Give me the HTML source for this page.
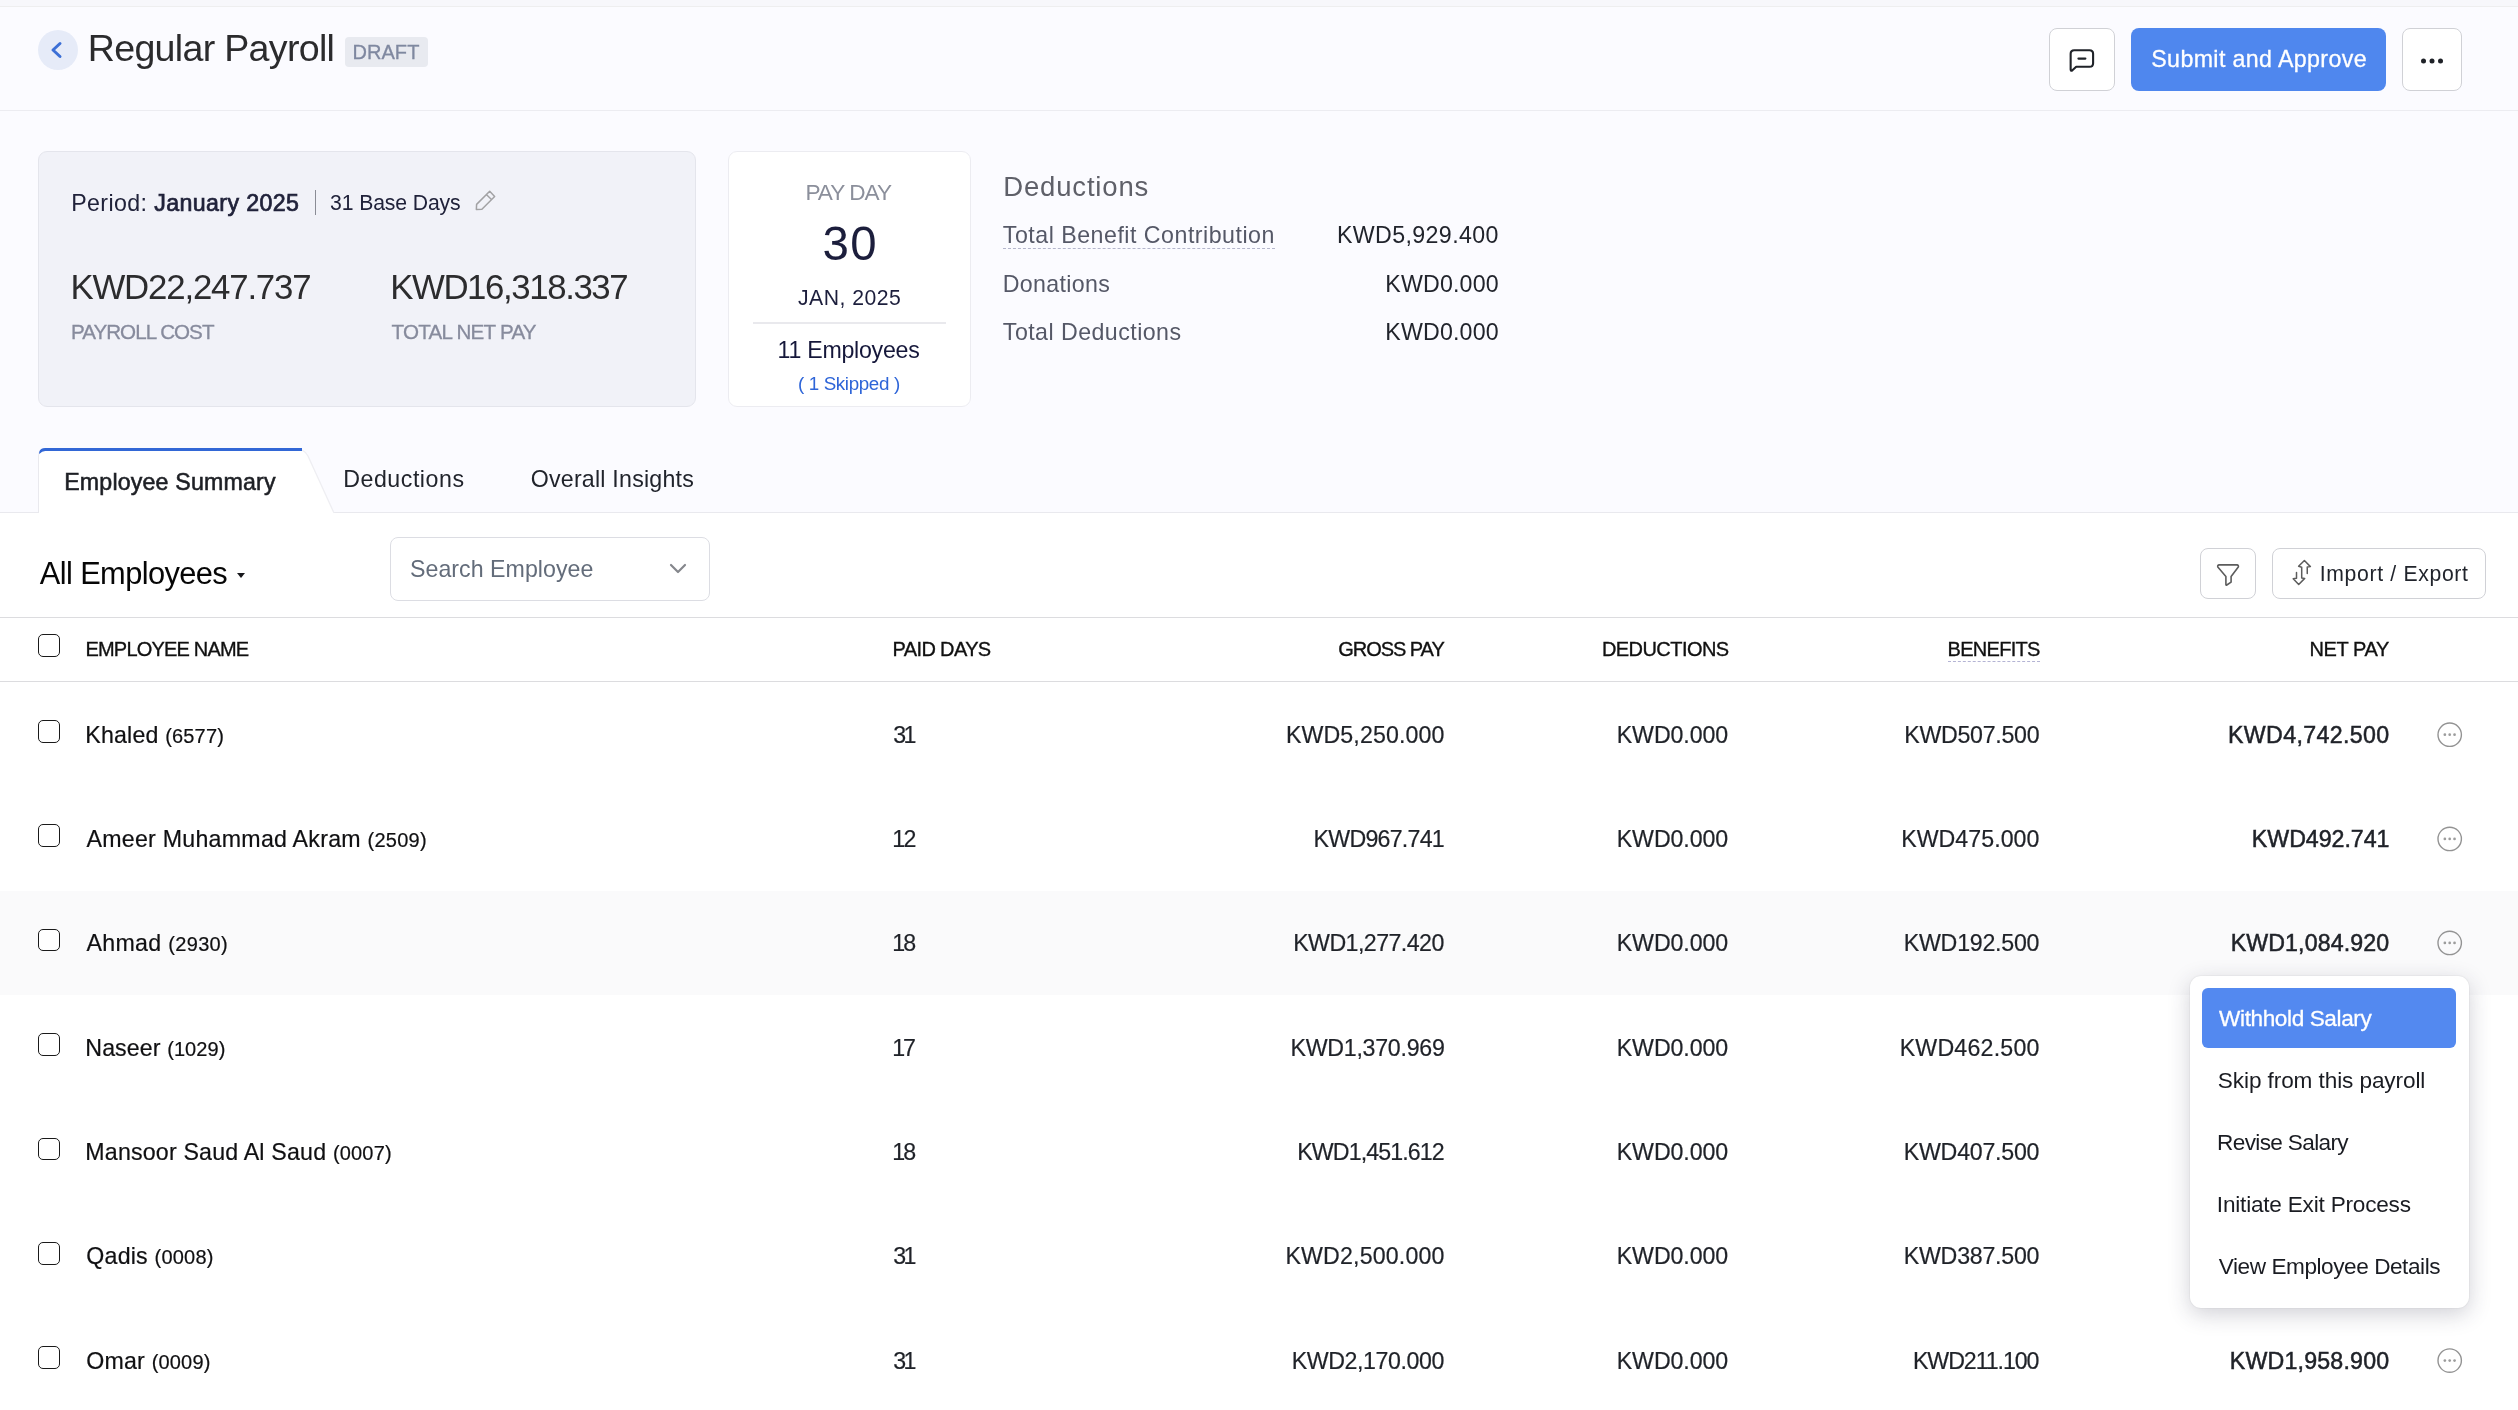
<!DOCTYPE html>
<html><head><meta charset="utf-8"><title>Regular Payroll</title>
<style>
*{box-sizing:border-box;margin:0;padding:0}
html,body{width:2518px;height:1410px;overflow:hidden;background:#fbfbff;font-family:"Liberation Sans",sans-serif;color:#21232b}
.a{position:absolute;white-space:nowrap;line-height:1}
.topstrip{left:0;top:0;width:2518px;height:7px;background:#f7f7fb;border-bottom:1px solid #eeeeef}
.hdrline{left:0;top:110px;width:2518px;height:1px;background:#ececf1}
.btn{border:1px solid #d0d1d6;border-radius:8px;background:#fff}
.white{left:0;top:513px;width:2518px;height:897px;background:#fff}
.hl{left:0;width:2518px;height:1px;background:#dcdcdf}
.cb{width:22.4px;height:22.6px;border:1.5px solid #1a1a1a;border-radius:5px;background:#fff;left:37.8px}
.nm{left:86px;font-size:23.5px;color:#101012;-webkit-text-stroke:0.2px}
.nm span{font-size:20px}
.c{font-size:23.5px;color:#1f2228;-webkit-text-stroke:0.2px}
.b{-webkit-text-stroke:0.5px}
.mi{left:2218px;font-size:22.5px;color:#1a1c22}
</style></head><body><div id="wrap" style="position:absolute;left:0;top:0;width:2518px;height:1410px;will-change:transform">
<div class="a topstrip"></div>
<div class="a hdrline"></div>
<!-- header -->
<div class="a" style="left:38px;top:30px;width:40px;height:40px;border-radius:50%;background:#e6ebf8"></div>
<svg class="a" style="left:38px;top:30px" width="40" height="40" viewBox="0 0 40 40"><path d="M22 13.5 L15 20 L22 26.5" fill="none" stroke="#3c6fd6" stroke-width="3" stroke-linecap="round" stroke-linejoin="round"/></svg>
<div class="a" id="title" style="left:87.75px;top:30px;font-size:37.6px;color:#2b2b2d;letter-spacing:-0.693px">Regular Payroll</div>
<div class="a" style="left:345px;top:37px;width:83px;height:30px;background:#e8eaf0;border-radius:4px"></div>
<div class="a" id="draft" style="-webkit-text-stroke:0.3px;left:352.40px;top:42px;font-size:20px;color:#7f88a0;letter-spacing:0.076px">DRAFT</div>
<div class="a btn" style="left:2049px;top:28px;width:66px;height:63px"></div>
<div class="a" style="left:2131px;top:28px;width:255px;height:63px;background:#4f87ee;border-radius:8px"></div>
<div class="a" id="submit" style="-webkit-text-stroke:0.3px;left:2151.25px;top:48px;font-size:23.2px;color:#fff;letter-spacing:0.382px">Submit and Approve</div>
<div class="a btn" style="left:2402px;top:28px;width:60px;height:63px"></div>
<!-- summary -->
<div class="a" style="left:38px;top:151px;width:658px;height:256px;background:#f1f2f8;border:1px solid #e4e5ec;border-radius:9px"></div>
<div class="a" id="period" style="left:71.25px;top:192px;font-size:23.2px;color:#20223a;letter-spacing:0.381px">Period: <span style="-webkit-text-stroke:0.7px">January 2025</span></div>
<div class="a" style="left:315px;top:190px;width:1px;height:25px;background:#8a8c95"></div>
<div class="a" id="base" style="left:330.10px;top:192px;font-size:21.2px;color:#20223a;letter-spacing:-0.126px">31 Base Days</div>
<div class="a" id="cost" style="left:70.45px;top:270px;font-size:34.8px;color:#2c2c2e;letter-spacing:-1.185px">KWD22,247.737</div>
<div class="a" id="net" style="left:390.15px;top:270px;font-size:34.8px;color:#2c2c2e;letter-spacing:-1.401px">KWD16,318.337</div>
<div class="a" id="costl" style="-webkit-text-stroke:0.3px;left:70.90px;top:322px;font-size:20.6px;color:#878b9d;letter-spacing:-0.958px">PAYROLL COST</div>
<div class="a" id="netl" style="-webkit-text-stroke:0.3px;left:391.55px;top:322px;font-size:20.6px;color:#878b9d;letter-spacing:-0.758px">TOTAL NET PAY</div>
<!-- payday -->
<div class="a" style="left:728px;top:151px;width:243px;height:256px;background:#fff;border:1px solid #ececf1;border-radius:9px"></div>
<div class="a" id="pd1" style="left:805.45px;top:182px;font-size:22.6px;color:#8b8f9b;letter-spacing:-0.998px">PAY DAY</div>
<div class="a" id="pd2" style="left:822.60px;top:220px;font-size:47.4px;color:#1c1e3c;letter-spacing:1.350px">30</div>
<div class="a" id="pd3" style="left:797.95px;top:287px;font-size:21.2px;color:#1c1e3c;letter-spacing:0.497px">JAN, 2025</div>
<div class="a" style="left:753px;top:322.3px;width:193px;height:1.5px;background:#e9e9ed"></div>
<div class="a" id="pd4" style="left:777.50px;top:339px;font-size:23.2px;color:#15173a;letter-spacing:-0.264px">11 Employees</div>
<div class="a" id="pd5" style="left:797.90px;top:375px;font-size:18.8px;color:#2e65d8;letter-spacing:-0.348px">( 1 Skipped )</div>
<!-- deductions -->
<div class="a" id="dd0" style="left:1003.20px;top:173px;font-size:27.5px;color:#5f6069;letter-spacing:0.842px">Deductions</div>
<div class="a" id="dd1" style="left:1002.85px;top:224px;font-size:23.2px;color:#555867;border-bottom:1px dashed #b4b6cc;padding-bottom:1px;letter-spacing:0.498px">Total Benefit Contribution</div>
<div class="a" id="dd2" style="left:1002.75px;top:273px;font-size:23.2px;color:#555867;letter-spacing:0.331px">Donations</div>
<div class="a" id="dd3" style="left:1002.85px;top:321px;font-size:23.2px;color:#555867;letter-spacing:0.450px">Total Deductions</div>
<div class="a r" id="dv1" style="top:224px;font-size:23.2px;color:#21242c;left:1336.95px;letter-spacing:0.386px">KWD5,929.400</div>
<div class="a r" id="dv2" style="top:273px;font-size:23.2px;color:#21242c;left:1385.25px;letter-spacing:0.184px">KWD0.000</div>
<div class="a r" id="dv3" style="top:321px;font-size:23.2px;color:#21242c;left:1385.25px;letter-spacing:0.184px">KWD0.000</div>
<!-- tabs -->
<div class="a white"></div>
<div class="a hl" style="top:512px;background:#e9e9ee"></div>
<svg class="a" style="left:30px;top:440px" width="320" height="80" viewBox="0 0 320 80"><path d="M8.2 73 V16 Q8.2 9 15.2 9 H266 Q273 9 277 16 L304 73 Z" fill="#fff"/><path d="M8.5 73 V16 Q8.5 9 15.5 9" fill="none" stroke="#e9e9ee" stroke-width="1"/><path d="M272 10 Q276 12 278 16 L304 73" fill="none" stroke="#eeeef2" stroke-width="1.3"/><path d="M9.2 12 Q10.2 8 15.2 8 H272 V11 H15.2 Q12.2 11 9.2 14 Z" fill="#3267d6"/></svg>
<div class="a" id="t1" style="-webkit-text-stroke:0.55px;left:64.20px;top:471px;font-size:23.2px;color:#1d1f24;letter-spacing:0.173px">Employee Summary</div>
<div class="a" id="t2" style="left:343.25px;top:468px;font-size:23.2px;color:#21242c;letter-spacing:0.524px">Deductions</div>
<div class="a" id="t3" style="left:530.75px;top:468px;font-size:23.2px;color:#21242c;letter-spacing:0.217px">Overall Insights</div>
<!-- toolbar -->
<div class="a" id="allemp" style="left:39.75px;top:559px;font-size:30.8px;color:#060606;letter-spacing:-0.596px">All Employees</div>
<div class="a" style="left:236.5px;top:572.5px;width:0;height:0;border-left:4.75px solid transparent;border-right:4.75px solid transparent;border-top:5.7px solid #17181c"></div>
<div class="a btn" style="left:390px;top:537px;width:320px;height:64px;border-color:#dcdde3"></div>
<div class="a" id="search" style="left:410.00px;top:558px;font-size:23.2px;color:#636c7a;letter-spacing:0.026px">Search Employee</div>
<svg class="a" style="left:666px;top:557.1px" width="24" height="24" viewBox="0 0 24 24"><path d="M5 8 L12 15 L19 8" fill="none" stroke="#85878c" stroke-width="2.2" stroke-linecap="round" stroke-linejoin="round"/></svg>
<div class="a btn" style="left:2200px;top:548px;width:56px;height:51px"></div>
<div class="a btn" style="left:2272px;top:548px;width:214px;height:51px"></div>
<div class="a" id="impexp" style="left:2319.75px;top:563px;font-size:21.2px;color:#21242c;letter-spacing:0.662px">Import / Export</div>
<!-- table head -->
<div class="a hl" style="top:617px"></div>
<div class="a hl" style="top:681px"></div>
<div class="a cb" style="top:634.1px"></div>
<div class="a" id="h1" style="-webkit-text-stroke:0.35px;left:85.50px;top:639px;font-size:20px;color:#111;letter-spacing:-0.814px">EMPLOYEE NAME</div>
<div class="a" id="h2" style="-webkit-text-stroke:0.35px;left:892.60px;top:639px;font-size:20px;color:#111;letter-spacing:-0.645px">PAID DAYS</div>
<div class="a r" id="h3" style="-webkit-text-stroke:0.35px;top:639px;font-size:20px;color:#111;left:1338.25px;letter-spacing:-1.040px">GROSS PAY</div>
<div class="a r" id="h4" style="-webkit-text-stroke:0.35px;top:639px;font-size:20px;color:#111;left:1601.90px;letter-spacing:-0.555px">DEDUCTIONS</div>
<div class="a r" id="h5" style="-webkit-text-stroke:0.35px;top:639px;font-size:20px;color:#111;border-bottom:1px dashed #b4b4d4;padding-bottom:2.2px;left:1947.60px;letter-spacing:-0.711px">BENEFITS</div>
<div class="a r" id="h6" style="-webkit-text-stroke:0.35px;top:639px;font-size:20px;color:#111;left:2309.50px;letter-spacing:-0.411px">NET PAY</div>
<!-- rows -->
<div class="a" style="left:0;top:891px;width:2518px;height:104px;background:#fafafb"></div>
<div id="rows">
<div class="a cb" style="top:720.1px;height:22.8px"></div>
<div class="a nm" id="n0" style="top:724px;font-size:23.2px;left:85.30px;letter-spacing:0.173px">Khaled <span>(6577)</span></div>
<div class="a c" id="d0" style="left:893.35px;top:724px;font-size:23.2px;letter-spacing:-2.800px">31</div>
<div class="a c r" id="g0" style="top:724px;font-size:23.2px;left:1285.95px;letter-spacing:0.107px">KWD5,250.000</div>
<div class="a c r" id="e0" style="top:724px;font-size:23.2px;left:1616.75px;letter-spacing:-0.092px">KWD0.000</div>
<div class="a c r" id="b0" style="top:724px;font-size:23.2px;left:1904.25px;letter-spacing:-0.292px">KWD507.500</div>
<div class="a c r b" id="p0" style="top:724px;font-size:23.2px;left:2228.05px;letter-spacing:0.347px">KWD4,742.500</div>
<div class="a cb" style="top:823.9px;height:23px"></div>
<div class="a nm" id="n1" style="top:828px;font-size:23.2px;left:86.50px;letter-spacing:0.252px">Ameer Muhammad Akram <span>(2509)</span></div>
<div class="a c" id="d1" style="left:892.35px;top:828px;font-size:23.2px;letter-spacing:-1.800px">12</div>
<div class="a c r" id="g1" style="top:828px;font-size:23.2px;left:1313.55px;letter-spacing:-0.754px">KWD967.741</div>
<div class="a c r" id="e1" style="top:828px;font-size:23.2px;left:1616.75px;letter-spacing:-0.092px">KWD0.000</div>
<div class="a c r" id="b1" style="top:828px;font-size:23.2px;left:1901.15px;letter-spacing:0.045px">KWD475.000</div>
<div class="a c r b" id="p1" style="top:828px;font-size:23.2px;left:2251.85px;letter-spacing:-0.030px">KWD492.741</div>
<div class="a cb" style="top:928.7px;height:22.4px"></div>
<div class="a nm" id="n2" style="top:932px;font-size:23.2px;left:86.50px;letter-spacing:0.314px">Ahmad <span>(2930)</span></div>
<div class="a c" id="d2" style="left:892.35px;top:932px;font-size:23.2px;letter-spacing:-2.050px">18</div>
<div class="a c r" id="g2" style="top:932px;font-size:23.2px;left:1293.15px;letter-spacing:-0.549px">KWD1,277.420</div>
<div class="a c r" id="e2" style="top:932px;font-size:23.2px;left:1616.75px;letter-spacing:-0.092px">KWD0.000</div>
<div class="a c r" id="b2" style="top:932px;font-size:23.2px;left:1903.75px;letter-spacing:-0.239px">KWD192.500</div>
<div class="a c r b" id="p2" style="top:932px;font-size:23.2px;left:2230.65px;letter-spacing:0.121px">KWD1,084.920</div>
<div class="a cb" style="top:1032.8px;height:23.1px"></div>
<div class="a nm" id="n3" style="top:1037px;font-size:23.2px;left:85.30px;letter-spacing:0.093px">Naseer <span>(1029)</span></div>
<div class="a c" id="d3" style="left:892.35px;top:1037px;font-size:23.2px;letter-spacing:-2.300px">17</div>
<div class="a c r" id="g3" style="top:1037px;font-size:23.2px;left:1290.55px;letter-spacing:-0.275px">KWD1,370.969</div>
<div class="a c r" id="e3" style="top:1037px;font-size:23.2px;left:1616.75px;letter-spacing:-0.092px">KWD0.000</div>
<div class="a c r" id="b3" style="top:1037px;font-size:23.2px;left:1899.65px;letter-spacing:0.212px">KWD462.500</div>
<div class="a cb" style="top:1137.8px;height:22.2px"></div>
<div class="a nm" id="n4" style="top:1141px;font-size:23.2px;left:85.30px;letter-spacing:0.188px">Mansoor Saud Al Saud <span>(0007)</span></div>
<div class="a c" id="d4" style="left:892.35px;top:1141px;font-size:23.2px;letter-spacing:-2.050px">18</div>
<div class="a c r" id="g4" style="top:1141px;font-size:23.2px;left:1297.25px;letter-spacing:-0.888px">KWD1,451.612</div>
<div class="a c r" id="e4" style="top:1141px;font-size:23.2px;left:1616.75px;letter-spacing:-0.092px">KWD0.000</div>
<div class="a c r" id="b4" style="top:1141px;font-size:23.2px;left:1903.75px;letter-spacing:-0.239px">KWD407.500</div>
<div class="a cb" style="top:1242px;height:22.6px"></div>
<div class="a nm" id="n5" style="top:1245px;font-size:23.2px;left:86.30px;letter-spacing:0.207px">Qadis <span>(0008)</span></div>
<div class="a c" id="d5" style="left:893.35px;top:1245px;font-size:23.2px;letter-spacing:-2.800px">31</div>
<div class="a c r" id="g5" style="top:1245px;font-size:23.2px;left:1285.45px;letter-spacing:0.153px">KWD2,500.000</div>
<div class="a c r" id="e5" style="top:1245px;font-size:23.2px;left:1616.75px;letter-spacing:-0.092px">KWD0.000</div>
<div class="a c r" id="b5" style="top:1245px;font-size:23.2px;left:1903.75px;letter-spacing:-0.239px">KWD387.500</div>
<div class="a cb" style="top:1345.8px;height:23.1px"></div>
<div class="a nm" id="n6" style="top:1350px;font-size:23.2px;left:86.30px;letter-spacing:0.185px">Omar <span>(0009)</span></div>
<div class="a c" id="d6" style="left:893.35px;top:1350px;font-size:23.2px;letter-spacing:-2.800px">31</div>
<div class="a c r" id="g6" style="top:1350px;font-size:23.2px;left:1291.65px;letter-spacing:-0.413px">KWD2,170.000</div>
<div class="a c r" id="e6" style="top:1350px;font-size:23.2px;left:1616.75px;letter-spacing:-0.092px">KWD0.000</div>
<div class="a c r" id="b6" style="top:1350px;font-size:23.2px;left:1912.95px;letter-spacing:-1.076px">KWD211.100</div>
<div class="a c r b" id="p6" style="top:1350px;font-size:23.2px;left:2229.75px;letter-spacing:0.198px">KWD1,958.900</div>
</div><!--endrows-->
<svg class="a" style="left:0;top:0" width="2518" height="1410" viewBox="0 0 2518 1410" fill="none" stroke-linecap="round" stroke-linejoin="round">
<path d="M2074.2 50.2 H2089.5 Q2093.1 50.2 2093.1 53.8 V63.2 Q2093.1 66.8 2089.5 66.8 H2076.2 L2072.4 70.3 Q2070.65 71.5 2070.65 69.5 V53.8 Q2070.65 50.2 2074.2 50.2 Z M2078.4 58.6 H2085.4" stroke="#1f2228" stroke-width="2.1"/>
<g fill="#1f2228"><circle cx="2423.5" cy="61.1" r="2.5"/><circle cx="2432" cy="61.1" r="2.5"/><circle cx="2440.5" cy="61.1" r="2.5"/></g>
<path d="M489.7 191.2 L494.65 196.5 L481.9 209.2 L476.35 209.5 L476.6 204.4 Z M486.85 195.05 L490.96 199" stroke="#a2a2a4" stroke-width="1.5"/>
<path d="M2219.3 564.9 H2236.9 Q2239 565.2 2238.3 567 L2231.1 576.5 V582.1 L2226.8 585 Q2225.9 585.4 2225.9 584.4 V576.5 L2217.8 567 Q2217.2 565.2 2219.3 564.9 Z" stroke="#5c5c5c" stroke-width="1.6"/>
<path d="M2307.25 573.4 V566.9 L2310.4 566.6 L2304.4 560.5 L2298.6 566.3 L2301.7 567.2 V578.1 L2304.7 578.4 L2298.7 584.5 L2293.2 578.8 L2296.5 578.2 V572.6" stroke="#5c5c5c" stroke-width="1.5"/>
<circle cx="2449.7" cy="734.7" r="11.7" stroke="#939393" stroke-width="1.4"/><g fill="#9c9c9c"><circle cx="2444.85" cy="734.7" r="1.35"/><circle cx="2449.7" cy="734.7" r="1.35"/><circle cx="2454.55" cy="734.7" r="1.35"/></g>
<circle cx="2449.7" cy="838.9" r="11.7" stroke="#939393" stroke-width="1.4"/><g fill="#9c9c9c"><circle cx="2444.85" cy="838.9" r="1.35"/><circle cx="2449.7" cy="838.9" r="1.35"/><circle cx="2454.55" cy="838.9" r="1.35"/></g>
<circle cx="2449.7" cy="942.9" r="11.7" stroke="#939393" stroke-width="1.4"/><g fill="#9c9c9c"><circle cx="2444.85" cy="942.9" r="1.35"/><circle cx="2449.7" cy="942.9" r="1.35"/><circle cx="2454.55" cy="942.9" r="1.35"/></g>
<circle cx="2449.7" cy="1360.6" r="11.7" stroke="#939393" stroke-width="1.4"/><g fill="#9c9c9c"><circle cx="2444.85" cy="1360.6" r="1.35"/><circle cx="2449.7" cy="1360.6" r="1.35"/><circle cx="2454.55" cy="1360.6" r="1.35"/></g>
</svg>
<!-- menu -->
<div class="a" style="left:2189.6px;top:975.6px;width:279.6px;height:332.8px;background:#fff;border-radius:11px;box-shadow:0 6px 22px rgba(40,40,70,.22),0 0 2px rgba(0,0,0,.12)"></div>
<div class="a" style="left:2202.1px;top:988.4px;width:254.4px;height:59.3px;background:#5389f0;border-radius:6px"></div>
<div class="a mi" id="m1" style="-webkit-text-stroke:0.3px;top:1008px;color:#fff;font-size:22.6px;left:2219.10px;letter-spacing:-0.399px">Withhold Salary</div>
<div class="a mi" id="m2" style="top:1070px;font-size:22.6px;left:2217.85px;letter-spacing:-0.102px">Skip from this payroll</div>
<div class="a mi" id="m3" style="top:1132px;font-size:22.6px;left:2217.10px;letter-spacing:-0.655px">Revise Salary</div>
<div class="a mi" id="m4" style="top:1194px;font-size:22.6px;left:2216.85px;letter-spacing:-0.214px">Initiate Exit Process</div>
<div class="a mi" id="m5" style="top:1256px;font-size:22.6px;left:2218.85px;letter-spacing:-0.450px">View Employee Details</div>
</div></body></html>
